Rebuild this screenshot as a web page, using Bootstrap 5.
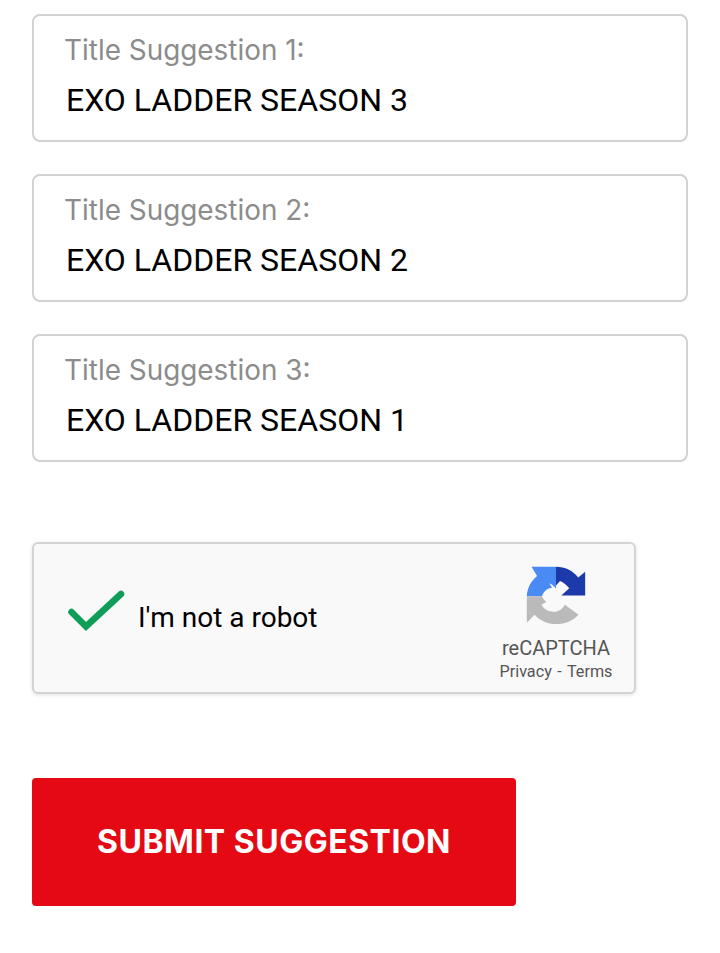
<!doctype html>
<html lang="en"><head><meta charset="utf-8">
<link href="https://cdn.jsdelivr.net/npm/bootstrap@5.3.0/dist/css/bootstrap.min.css" rel="stylesheet">
<style>
html,body{background:#fff;margin:0}
.page-wrap{padding:14px 32px 47px}
.title-box{height:128px;border:2px solid #d2d2d2;border-radius:8px;margin-bottom:32px;padding:0;background:#fff}
.title-box:last-of-type{margin-bottom:0}
.title-label{display:block;font-family:Inter,sans-serif;font-size:27.9px;line-height:32px;color:#8c8c8c;margin:0;padding:18px 0 0 30px}
.title-input{display:block;width:100%;border:0;outline:0;background:transparent;padding:0 0 0 32px;margin-top:12px;height:44px;font-family:Roboto,sans-serif;font-size:32px;color:#000}
.captcha-box{margin-top:80px;width:604px;height:152px;background:#f9f9f9;border:2px solid #d3d3d3;border-radius:6px;box-shadow:0 1px 4px rgba(0,0,0,.12);padding:0 20px 0 32px}
.captcha-text{font-family:Roboto,sans-serif;font-size:28px;color:#000;margin-left:12px}
.captcha-side{width:116px;margin-top:13px;font-family:Roboto,sans-serif;color:#555}
.captcha-name{font-size:20px;line-height:26px;margin-top:11px}
.captcha-links{font-size:16.2px;line-height:22px;white-space:nowrap;word-spacing:1.5px}
.submit-btn{display:block;margin-top:84px;width:484px;height:128px;background:#e50914;border:0;border-radius:4px;color:#fff;font-family:Inter,sans-serif;font-weight:700;font-size:32px;letter-spacing:.5px;padding:0}
.submit-btn:hover,.submit-btn:active{background:#e50914!important;color:#fff!important}
</style></head>
<body>
<main class="page-wrap">
<form>
<div class="title-box"><label class="title-label" for="t1">Title Suggestion 1:</label><input class="title-input" id="t1" value="EXO LADDER SEASON 3"></div>
<div class="title-box"><label class="title-label" for="t2">Title Suggestion 2:</label><input class="title-input" id="t2" value="EXO LADDER SEASON 2"></div>
<div class="title-box"><label class="title-label" for="t3">Title Suggestion 3:</label><input class="title-input" id="t3" value="EXO LADDER SEASON 1"></div>
<div class="captcha-box d-flex align-items-center">
<svg width="60" height="60" viewBox="0 0 60 60" aria-hidden="true"><path d="M5.5 24 L20 38.5 L55 6" fill="none" stroke="#0f9d58" stroke-width="6.5" stroke-linecap="round" stroke-linejoin="miter"/></svg>
<span class="captcha-text">I'm not a robot</span>
<div class="captcha-side ms-auto d-flex flex-column align-items-center text-center">
<svg width="60" height="58" viewBox="48 33 180 175" aria-hidden="true">
<path fill="#4a8af4" d="M50 124 C51 100 62 78 81 63 L64 35 H138 V101 C130 92 124 87 118 85 L126 99 C112 100 101 110 96 124 Z"/>
<path fill="#1c3aa9" d="M138 35 C165 35 189 46 205 68 L226 50 V122 H154 L178 100 C170 90 161 83 150 78 L138 92 Z"/>
<path fill="#bababa" d="M50 124 H95 C100 132 104 138 110 141 L94 150 C103 166 122 174 140 170 C150 168 158 162 165 150 L206 180 C190 198 165 208 138 208 C112 208 90 198 73 180 L50 204 Z"/>
</svg>
<div class="captcha-name">reCAPTCHA</div>
<div class="captcha-links">Privacy&nbsp;- Terms</div>
</div>
</div>
<button type="button" class="btn submit-btn">SUBMIT SUGGESTION</button>
</form>
</main>
<script src="https://cdn.jsdelivr.net/npm/bootstrap@5.3.0/dist/js/bootstrap.bundle.min.js"></script>
</body></html>
